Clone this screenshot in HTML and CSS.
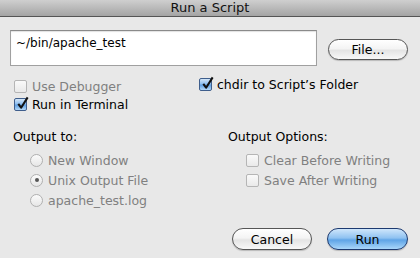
FILE: index.html
```html
<!DOCTYPE html>
<html lang="en">
<head>
    <meta charset="UTF-8">
    <meta name="viewport" content="width=device-width, initial-scale=1.0">
    <title>Run a Script</title>
    <link rel="stylesheet" href="styles.css">
</head>
<body>
    <div class="window">
        <div class="titlebar">Run a Script</div>

        <div class="content">
            <!-- Script path -->
            <div class="path-row">
                <div class="path-field">~/bin/apache_test</div>
                <button class="aqua-button file-button">File...</button>
            </div>

            <!-- Run flags -->
            <div class="flags">
                <label class="check disabled"><span class="box"></span>Use Debugger</label>
                <label class="check chdir"><span class="box checked"><svg viewBox="0 0 16 16"><path d="M3.5 8.5 L6.5 12.5 L13.5 1.5" fill="none" stroke="#111" stroke-width="2.2" stroke-linejoin="round"/></svg></span>chdir to Script’s Folder</label>
                <label class="check"><span class="box checked"><svg viewBox="0 0 16 16"><path d="M3.5 8.5 L6.5 12.5 L13.5 1.5" fill="none" stroke="#111" stroke-width="2.2" stroke-linejoin="round"/></svg></span>Run in Terminal</label>
            </div>

            <!-- Output settings -->
            <div class="outputs">
                <div class="output-group">
                    <div class="group-title">Output to:</div>
                    <div class="group-items">
                        <label class="check disabled"><span class="radio"></span>New Window</label>
                        <label class="check disabled"><span class="radio selected"></span>Unix Output File</label>
                        <label class="check disabled"><span class="radio"></span>apache_test.log</label>
                    </div>
                </div>
                <div class="output-group options">
                    <div class="group-title">Output Options:</div>
                    <div class="group-items">
                        <label class="check disabled"><span class="box"></span>Clear Before Writing</label>
                        <label class="check disabled"><span class="box"></span>Save After Writing</label>
                    </div>
                </div>
            </div>

            <div class="actions">
                <button class="aqua-button">Cancel</button>
                <button class="aqua-button default">Run</button>
            </div>
        </div>
    </div>
</body>
</html>
```

FILE: styles.css
```css
* {
    box-sizing: border-box;
}

body {
    margin: 0;
    width: 420px;
    height: 258px;
    overflow: hidden;
    background: #e8e8e8;
    font-family: "DejaVu Sans", Verdana, sans-serif;
    font-size: 12.5px;
    color: #000;
}

.titlebar {
    height: 17px;
    line-height: 16px;
    text-align: center;
    font-size: 13px;
    color: #111;
    background: linear-gradient(#cfcfcf, #a4a4a4);
    border-bottom: 1px solid #555;
}

.content {
    padding: 13px 12px 0 10px;
}

.path-row {
    display: flex;
    align-items: center;
}

.path-field {
    width: 307px;
    height: 36px;
    padding: 4px 5px;
    background: #fff;
    border: 1px solid #a0a0a0;
    border-top-color: #8a8a8a;
    box-shadow: inset 0 1px 1px rgba(0, 0, 0, 0.12);
    line-height: 16px;
    font-size: 12px;
}

.aqua-button {
    height: 21px;
    width: 80px;
    padding: 0;
    font-family: inherit;
    font-size: 12.5px;
    color: #000;
    border: 1px solid #555;
    border-radius: 11px;
    background: linear-gradient(#ffffff 0%, #f4f4f4 45%, #e4e4e4 55%, #f8f8f8 100%);
    box-shadow: 0 1px 1px rgba(0, 0, 0, 0.2);
}

.file-button {
    margin-left: 11px;
    margin-top: 2px;
}

.flags {
    display: grid;
    grid-template-columns: 185px auto;
    margin-top: 11px;
    padding-left: 4px;
}

.check {
    display: flex;
    align-items: center;
    height: 18px;
    white-space: nowrap;
}

.check.disabled {
    color: #808080;
}

.check.chdir {
    margin-top: -2px;
}

.box {
    position: relative;
    width: 13px;
    height: 13px;
    margin-right: 5px;
    border: 1px solid #b5b5b5;
    border-radius: 2px;
    background: linear-gradient(#fafafa, #e9e9e9);
    flex-shrink: 0;
}

.box.checked {
    border-color: #3f5e8c;
    background: linear-gradient(#d3e6f8 0%, #8dbef0 45%, #5e9fe2 55%, #b3d8f8 100%);
}

.box svg {
    position: absolute;
    left: 0;
    top: -3px;
    width: 15px;
    height: 15px;
}

.outputs {
    display: flex;
    margin-top: 16px;
    padding-left: 3px;
}

.output-group {
    width: 215px;
}

.output-group.options {
    width: auto;
}

.group-title {
    height: 16px;
    line-height: 16px;
    font-size: 12.5px;
}

.group-items {
    margin-top: 5px;
    padding-left: 17px;
}

.output-group .check {
    height: 20px;
}

.options .group-items {
    padding-left: 18px;
}

.radio {
    position: relative;
    width: 13px;
    height: 13px;
    margin-right: 5px;
    border: 1px solid #b0b0b0;
    border-radius: 50%;
    background: linear-gradient(#fbfbfb, #e6e6e6);
    flex-shrink: 0;
}

.radio.selected::after {
    content: "";
    position: absolute;
    left: 3.5px;
    top: 3.5px;
    width: 4px;
    height: 4px;
    border-radius: 50%;
    background: #555;
}

.actions {
    display: flex;
    justify-content: flex-end;
    gap: 15px;
    margin-top: 18px;
}

.actions .aqua-button {
    height: 22px;
}

.aqua-button.default {
    width: 81px;
    border-color: #1d3a70;
    background: linear-gradient(#cfe6fb 0%, #8fc2f1 45%, #5fa4e6 55%, #a9d6fa 100%);
}
```
